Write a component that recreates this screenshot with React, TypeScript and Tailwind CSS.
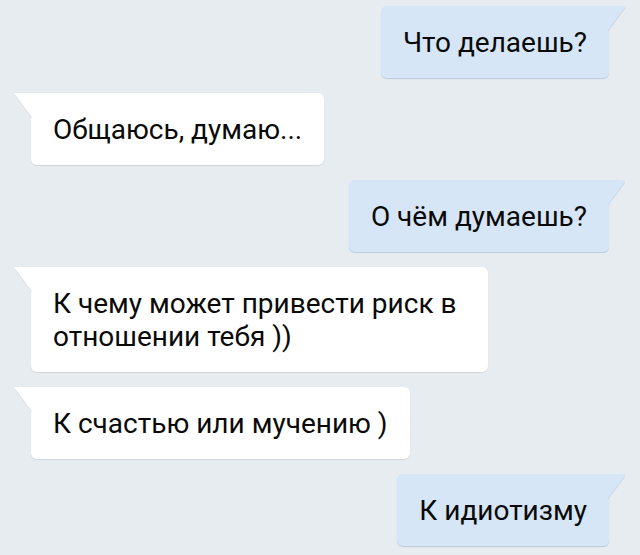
import type { ReactNode } from 'react';

type BubbleProps = {
  out?: boolean;
  children: ReactNode;
};

function Bubble({ out = false, children }: BubbleProps) {
  return (
    <div className={`flex ${out ? 'justify-end' : 'justify-start'}`}>
      <div className={`relative ${out ? 'mr-[18px]' : 'ml-[18px]'}`}>
        {/* tail */}
        <svg
          className={`absolute top-0 ${out ? 'right-[-18px]' : 'left-[-18px] -scale-x-100'}`}
          width="19"
          height="26"
          viewBox="0 0 19 26"
          aria-hidden
        >
          <path
            d="M0 0 H16 Q18.5 0 17 2.2 L0 25 Z"
            fill={out ? '#d6e6f6' : '#ffffff'}
          />
          <path
            d="M17 2.2 L0 25"
            stroke={out ? '#bfd0e2' : '#d3dae1'}
            strokeWidth="0.8"
            fill="none"
          />
        </svg>
        <div
          className={`${
            out
              ? 'bg-[#d6e6f6] rounded-tl-[6px] shadow-[0_1px_1px_#b9cbdd]'
              : 'bg-white rounded-tr-[6px] shadow-[0_1px_1px_#cfd6dd]'
          } rounded-b-[6px] px-[22px] pt-[20px] pb-[19px] text-[28px] leading-[33px] text-[#0a0a0a]`}
        >
          {children}
        </div>
      </div>
    </div>
  );
}

export default function App() {
  return (
    <div
      className="w-[640px] h-[555px] overflow-hidden bg-[#e7ecf0] px-[13px] pt-[6px] flex flex-col gap-[15px]"
      style={{ fontFamily: 'Roboto, "Noto Sans", sans-serif' }}
    >
      <Bubble out>Что делаешь?</Bubble>
      <Bubble>Общаюсь, думаю...</Bubble>
      <Bubble out>О чём думаешь?</Bubble>
      <Bubble>
        <div className="w-[413px]">К чему может привести риск в отношении тебя ))</div>
      </Bubble>
      <Bubble>К счастью или мучению )</Bubble>
      <Bubble out>К идиотизму</Bubble>
    </div>
  );
}
